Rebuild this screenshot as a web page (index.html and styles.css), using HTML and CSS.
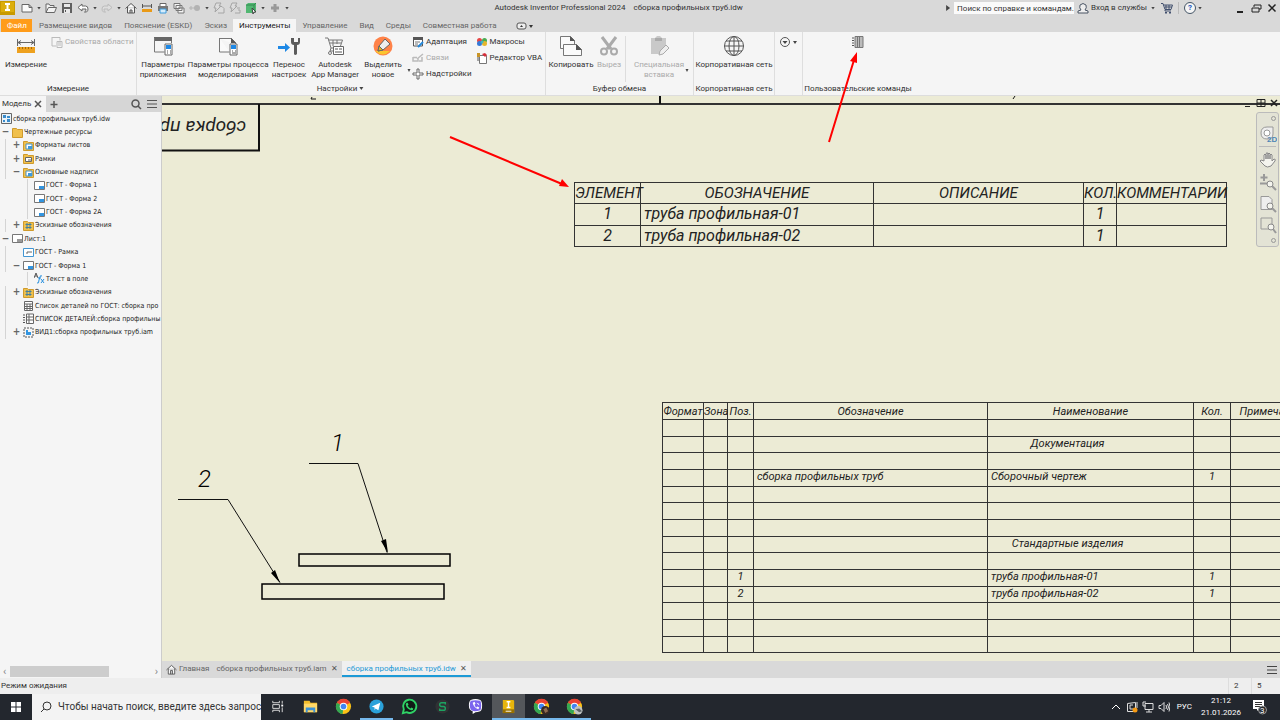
FILE: index.html
```
<!DOCTYPE html>
<html lang="ru">
<head>
    <meta charset="UTF-8">
    <title>сборка профильных труб.idw</title>
    <link rel="stylesheet" href="styles.css">
</head>
<body>
<svg class="sprite" aria-hidden="true">
    <symbol id="folder" viewBox="0 0 11 11"><path d="M0.5 1.5h4l1 1h5v8h-10z" fill="#f0c04c" stroke="#cf9a2c"/></symbol>
    <symbol id="folder-page" viewBox="0 0 11 11"><path d="M0.5 1.5h4l1 1h5v8h-10z" fill="#f0c04c" stroke="#cf9a2c"/><path d="M3 4h6v5h-6z" fill="#fff" stroke="#4b93c4"/><path d="M5 6h4v3h-4z" fill="#3a9ae0"/></symbol>
    <symbol id="folder-frame" viewBox="0 0 11 11"><path d="M0.5 1.5h4l1 1h5v8h-10z" fill="#f0c04c" stroke="#cf9a2c"/><path d="M2.5 4.5h6v4h-6z" fill="#fff" stroke="#666"/><path d="M5 7h3" stroke="#666"/></symbol>
    <symbol id="folder-sketch" viewBox="0 0 11 11"><path d="M0.5 1.5h4l1 1h5v8h-10z" fill="#f0c04c" stroke="#cf9a2c"/><path d="M4 3v6M7 3v6M2.5 4.5h6M2.5 7.5h6" stroke="#44809f"/></symbol>
    <symbol id="form" viewBox="0 0 11 11"><path d="M0.5 1.5h10v8h-10z" fill="#fff" stroke="#777"/><path d="M5 6h5v3h-5z" fill="#3295e0"/></symbol>
    <symbol id="gear-window" viewBox="0 0 22 20"><path d="M2 1h18v4h-18z" fill="#666"/><path d="M2.500 2v14h10M19.500 5v2" fill="none" stroke="#777"/><path d="M13 8h7v11h-7z" fill="#fff" stroke="#666"/><path d="M14 9h5v4h-5z" fill="#1e88e5"/><path d="M15 15h1M18 15h1M15 17h1M18 17h1" stroke="#555"/></symbol>
</svg>

<header class="titlebar">
    <div class="quick">
        <svg class="logo" viewBox="0 0 16 16"><path d="M0 1h15v14h-15z" fill="#c89a00"/><path d="M1 2h13v10h-13z" fill="#dcae0b"/><path d="M5 4h5M5 10h5M7.5 4v6" stroke="#fff" stroke-width="2"/></svg>
        <button aria-label="Создать"><svg viewBox="0 0 12 12"><path d="M1 2.500h7l3 3v4.500h-10zM8 2.500v3h3" fill="#fafafa" stroke="#666"/></svg></button>
        <i class="caret"></i>
        <button aria-label="Открыть"><svg viewBox="0 0 12 12"><path d="M1 10.500v-8.500h3l1 1.500h4v2M1 10.500l2.500-5h8l-2 5z" fill="#f2f2f2" stroke="#666"/></svg></button>
        <button aria-label="Сохранить"><svg viewBox="0 0 12 12"><path d="M1 1h10v10h-10z" fill="#606060"/><path d="M3 2h6v3h-6zM3 7h6v4h-6z" fill="#e8e8e8"/><path d="M4.500 8v2" stroke="#555"/></svg></button>
        <button aria-label="Отменить"><svg viewBox="0 0 12 12"><path d="M1 5.500l4-3.500v2h3.500q2.500 0 2.500 3 0 2-1.500 3h-2q2-1 1.500-3h-4v2z" fill="#fff" stroke="#666"/></svg></button>
        <i class="caret"></i>
        <button aria-label="Повторить"><svg viewBox="0 0 12 12"><path d="M11 5.500l-4-3.500v2h-3.500q-2.500 0-2.500 3 0 2 1.500 3h2q-2-1-1.500-3h4v2z" fill="#ddd" stroke="#bbb"/></svg></button>
        <i class="caret"></i>
        <button aria-label="Домой"><svg viewBox="0 0 12 12"><path d="M0.500 6.500l5.500-5 5.500 5M2.500 5v6h7v-6M5 11v-3h2v3" fill="#f8f8f8" stroke="#555"/></svg></button>
        <button aria-label="Измерить"><svg viewBox="0 0 12 12"><path d="M1.500 2v4M10.500 2v4M2 4h8" stroke="#555"/><path d="M1 7h10v3h-10z" fill="#e99a17"/></svg></button>
        <button aria-label="Печать"><svg viewBox="0 0 12 12"><path d="M3 1.500h6v3h-6z" fill="#fff" stroke="#666"/><path d="M1 4h10v5h-10z" fill="#777"/><path d="M3 7h6v4h-6z" fill="#d5ecfb" stroke="#3d9bdd"/></svg></button>
        <button aria-label="Копии"><svg viewBox="0 0 12 12"><path d="M1 1.500h6v5h-6zM3 3.500h6v5h-6zM5 6h6v5h-6z" fill="#f5f5f5" stroke="#777"/></svg></button>
        <button aria-label="Точка"><svg viewBox="0 0 12 12"><circle cx="8" cy="6" r="3" fill="#b3b3b3"/><path d="M0 6h6M2 4v4" stroke="#b3b3b3"/></svg></button>
        <i class="caret"></i>
        <button aria-label="Обновить"><svg viewBox="0 0 12 12"><path d="M3 1h5l-2 3h2l-6 6 1-4h-2zM8 4.500h1l2 2v4.500h-6" fill="#ddd" stroke="#a5a5a5"/></svg></button>
        <button aria-label="Обновить всё"><svg viewBox="0 0 12 12"><path d="M3 1h5l-2 3h2l-6 6 1-4h-2zM8 6h3M9 8h2v3h-5" fill="#ddd" stroke="#a5a5a5"/></svg></button>
        <button aria-label="Выбор"><svg viewBox="0 0 12 12"><path d="M1 3l2-2h8v8l-2 2h-8z" fill="#52b772"/><path d="M1 3h8v8M9 3l2-2" fill="none" stroke="#338b50"/><path d="M7 6l4 4-2 0-1 2z" fill="#fff" stroke="#444"/></svg></button>
        <i class="caret"></i>
        <button aria-label="Добавить"><svg viewBox="0 0 12 12"><path d="M6 2v8M2 6h8" stroke="#999" stroke-width="3"/></svg></button>
        <i class="caret"></i>
    </div>
    <div class="app-title">Autodesk Inventor Professional 2024 <span>сборка профильных труб.idw</span></div>
    <div class="account">
        <i class="caret right"></i>
        <input type="text" aria-label="Поиск по справке" placeholder="Поиск по справке и командам.">
        <button class="login"><svg viewBox="0 0 12 12"><path d="M1 11v-2l3-1q-2-2-1-5 3-3 6 0 1 3-1 5l3 1v2z" fill="#eee" stroke="#4a5565"/></svg>Вход в службы<i class="caret"></i></button>
        <button aria-label="Магазин"><svg viewBox="0 0 12 12"><path d="M0 1.500h2l2 6h6l1.500-4.500h-9M5 3v4M8 3v4M4 5h7M4 8l0 1h6" fill="none" stroke="#42506e"/><path d="M4 10h2v1.500h-2zM8 10h2v1.500h-2z" fill="#42506e"/></svg></button>
        <i class="line"></i>
        <button class="help" aria-label="Справка">?</button>
        <i class="caret"></i>
        <div class="window-buttons">
            <button aria-label="Свернуть"><svg viewBox="0 0 12 12"><path d="M3 10h6" stroke="#222" stroke-width="2"/></svg></button>
            <button aria-label="Развернуть"><svg viewBox="0 0 12 12"><path d="M4 5v-2h7v4h-2M2 6h7v4h-7z" fill="none" stroke="#222"/></svg></button>
            <button aria-label="Закрыть"><svg viewBox="0 0 12 12"><path d="M2.500 2.500l7 7M9.500 2.500l-7 7" stroke="#222" stroke-width="1.500"/></svg></button>
        </div>
    </div>
</header>

<nav class="ribbon-tabs">
    <a class="file" href="#">Файл</a>
    <a href="#">Размещение видов</a>
    <a href="#">Пояснение (ESKD)</a>
    <a href="#">Эскиз</a>
    <a class="selected" href="#">Инструменты</a>
    <a href="#">Управление</a>
    <a href="#">Вид</a>
    <a href="#">Среды</a>
    <a href="#">Совместная работа</a>
    <button aria-label="Лента"><svg viewBox="0 0 18 8"><rect x="1" y="1" width="9" height="6" rx="2" fill="#eee" stroke="#555"/><path d="M4 5l1.500-2 1.500 2z" fill="#333"/><path d="M13 3h4l-2 3z" fill="#333"/></svg></button>
</nav>

<section class="ribbon">
    <div class="group measure">
        <div class="tools">
            <button class="big"><svg viewBox="0 0 22 20"><path d="M2.500 3v7M19.500 3v7M3 6.500h16M6 4.500l-3 2 3 2M16 4.500l3 2-3 2" fill="none" stroke="#666"/><path d="M2 11h18v6h-18z" fill="#eea11e"/><path d="M4.500 11v2M7.500 11v2M10.500 11v2M13.500 11v2M16.500 11v2" stroke="#a66b0b"/></svg>Измерение</button>
            <div class="column"><button class="small off"><svg viewBox="0 0 12 12"><path d="M1 1.500h8v3M1 1v9h4M6 5.500h5v6h-5zM7 7h3M7 9h3" fill="none" stroke="#bbb"/></svg>Свойства области</button></div>
        </div>
        <h2>Измерение</h2>
    </div>
    <div class="group settings">
        <div class="tools">
            <button class="big"><svg><use href="#gear-window"/></svg><span>Параметры<br>приложения</span></button>
            <button class="big wide"><svg viewBox="0 0 22 20"><path d="M2.500 2.500h12l4 4v2M14.500 2.500v4h4M2.500 2v14h10" fill="#fafafa" stroke="#777"/><path d="M14 2l5 5h-5z" fill="#555"/><path d="M13 8h7v11h-7z" fill="#fff" stroke="#666"/><path d="M14 9h5v4h-5z" fill="#1e88e5"/><path d="M15 15h1M18 15h1M15 17h4" stroke="#555"/></svg><span>Параметры процесса<br>моделирования</span></button>
            <button class="big narrow"><svg viewBox="0 0 22 20"><path d="M0 10h7v-3l5 4.500-5 4.500v-3h-7z" fill="#1e88e5"/><path d="M13 2v4q0 3 3 3v9q1 2 3 0v-9q3 0 3-3v-4h-2v4h-4v-4z" fill="#5b5b5b"/></svg><span>Перенос<br>настроек</span></button>
            <button class="big"><svg viewBox="0 0 22 20"><path d="M1 2h3l3 10h3M4.500 4h14l-2 6M6 7h11M9 4v6M13 4v4M7 12l-1 3h4" fill="none" stroke="#777"/><path d="M9.500 10.500h10v8h-10z" fill="#fff" stroke="#666"/><path d="M11 13h3M11 16h7M15 13h3" stroke="#555"/><circle cx="6" cy="17" r="1.500" fill="none" stroke="#777"/></svg><span>Autodesk<br>App Manager</span></button>
            <button class="big mark"><svg viewBox="0 0 22 20"><circle cx="11" cy="10" r="9.500" fill="#ff8248"/><path d="M3 15h15q-7 7-15 0" fill="#f9c62e"/><path d="M7 10l6-7 5 5-7 6-5 1z" fill="#eee" stroke="#666"/><path d="M6 15l1-5 4 4z" fill="#e2b324" stroke="#666"/></svg><span>Выделить<br>новое</span></button>
            <i class="caret"></i>
            <div class="column">
                <button class="small"><svg viewBox="0 0 12 12"><path d="M1.500 2h9v8h-9z" fill="#fff" stroke="#555"/><path d="M1 1h10v3h-10z" fill="#555"/><path d="M3 6h5M3 8h3" stroke="#777"/><path d="M6 11l5-5" stroke="#268adb" stroke-width="2"/></svg>Адаптация</button>
                <button class="small off"><svg viewBox="0 0 12 12"><path d="M1 5.500h4M1 5v4h5v-3M5 7l6-5M7 9h3v-4" fill="none" stroke="#bbb" stroke-width="1.500"/></svg>Связи</button>
                <button class="small"><svg viewBox="0 0 12 12"><path d="M5 1h2v4h4v2h-4v4h-2v-4h-4v-2h4z" fill="#fff" stroke="#666"/></svg>Надстройки</button>
            </div>
            <div class="column">
                <button class="small"><svg viewBox="0 0 12 12"><circle cx="3.500" cy="4.500" r="2.500" fill="#e74646"/><circle cx="3.500" cy="7.500" r="2.500" fill="#3679d6"/><circle cx="8.500" cy="4.500" r="2.500" fill="#4aac51"/><circle cx="8.500" cy="7.500" r="2.500" fill="#e7b62b"/><circle cx="6" cy="6" r="1.500" fill="#42b6c0"/></svg>Макросы</button>
                <button class="small"><svg viewBox="0 0 12 12"><path d="M3.500 3.500h7v8h-7z" fill="#fff" stroke="#777"/><path d="M1 1h3v4h-3z" fill="#c99426"/><path d="M6 2l3-1 2 2-2 2z" fill="#d72c38"/><path d="M2 5v4" stroke="#555"/></svg>Редактор VBA</button>
            </div>
        </div>
        <h2>Настройки <i class="caret"></i></h2>
    </div>
    <div class="group clipboard">
        <div class="tools">
            <button class="big copy"><svg viewBox="0 0 22 20"><path d="M0.500 0.500h10l4 4v8h-14z" fill="#fafafa" stroke="#777"/><path d="M10 0l5 5h-5z" fill="#555"/><path d="M3.500 8.500h13l5 5v6h-18z" fill="#fafafa" stroke="#777"/><path d="M16 8l6 6h-6z" fill="#555"/></svg>Копировать</button>
            <button class="big cut off"><svg viewBox="0 0 22 20"><path d="M4 1l9 12M18 1l-9 12" stroke="#aaa" stroke-width="3"/><circle cx="6" cy="15.500" r="3" fill="none" stroke="#aaa" stroke-width="2"/><circle cx="16" cy="15.500" r="3" fill="none" stroke="#aaa" stroke-width="2"/></svg>Вырез</button>
            <i class="line"></i>
            <button class="big off"><svg viewBox="0 0 22 20"><path d="M3 2h4l2-2h3l2 2h4v10l-6 6h-9z" fill="#c9c9c9"/><path d="M7 2h7v3h-7z" fill="#aaa"/><path d="M11 19l1-4 6-6 3 3-6 6z" fill="#eee" stroke="#aaa"/></svg><span>Специальная<br>вставка</span></button>
            <i class="caret"></i>
        </div>
        <h2>Буфер обмена</h2>
    </div>
    <div class="group network">
        <div class="tools">
            <button class="big wide"><svg viewBox="0 0 22 20"><g fill="none" stroke="#555"><circle cx="11" cy="10" r="9.500"/><ellipse cx="11" cy="10" rx="5" ry="9.500"/><path d="M11 0.500v19M1.500 10h19M3 5h16M3 15h16"/></g></svg>Корпоративная сеть</button>
        </div>
        <h2>Корпоративная сеть</h2>
    </div>
    <div class="group options">
        <button aria-label="Параметры"><svg viewBox="0 0 12 12"><circle cx="6" cy="6" r="4.500" fill="none" stroke="#555"/><path d="M3.500 5h5l-2.500 3z" fill="#444"/></svg></button><i class="caret"></i>
    </div>
    <div class="group custom">
        <div class="tools">
            <button aria-label="Список деталей"><svg viewBox="0 0 12 12"><path d="M3 0.500h8v11h-8z" fill="#bbb" stroke="#777"/><path d="M5.500 1v10M7.500 1v10" stroke="#777"/><path d="M0 2h2M0 4.500h2M0 7h2M0 9.500h2" stroke="#555"/></svg></button>
        </div>
        <h2>Пользовательские команды</h2>
    </div>
</section>

<main class="workspace">
    <aside class="browser">
        <div class="browser-head">
            <button class="model">Модель <svg viewBox="0 0 12 12"><path d="M3 3l6 6M9 3l-6 6" stroke="#555" stroke-width="1.500"/></svg></button>
            <button class="plus" aria-label="Добавить"><svg viewBox="0 0 12 12"><path d="M6 3v7M2.500 6.500h7" stroke="#555" stroke-width="1.500"/></svg></button>
            <button aria-label="Поиск"><svg viewBox="0 0 12 12"><circle cx="5.500" cy="5.500" r="3.500" fill="none" stroke="#555" stroke-width="1.500"/><path d="M8 8l3 3" stroke="#555" stroke-width="1.500"/></svg></button>
            <button aria-label="Меню"><svg viewBox="0 0 12 12"><path d="M1 2.500h10M1 6h10M1 9.500h10" stroke="#555"/></svg></button>
        </div>
        <ul class="tree">
            <li><svg viewBox="0 0 11 11"><path d="M0.500 0.500h10v10h-10z" fill="#e9f3fa" stroke="#666"/><path d="M2 2h3v3h-3zM6 3h3v2h-3zM2 7h2v2h-2zM6 6h3v3h-3z" fill="#398ccc"/></svg>сборка профильных труб.idw</li>
            <li class="l1"><b>−</b><svg><use href="#folder"/></svg>Чертежные ресурсы</li>
            <li class="l2"><b>+</b><svg><use href="#folder-page"/></svg>Форматы листов</li>
            <li class="l2"><b>+</b><svg><use href="#folder-frame"/></svg>Рамки</li>
            <li class="l2"><b>−</b><svg><use href="#folder-page"/></svg>Основные надписи</li>
            <li class="l3"><b></b><svg><use href="#form"/></svg>ГОСТ - Форма 1</li>
            <li class="l3"><b></b><svg><use href="#form"/></svg>ГОСТ - Форма 2</li>
            <li class="l3"><b></b><svg><use href="#form"/></svg>ГОСТ - Форма 2А</li>
            <li class="l2"><b>+</b><svg><use href="#folder-sketch"/></svg>Эскизные обозначения</li>
            <li class="l1"><b>−</b><svg viewBox="0 0 11 11"><path d="M0.500 1.500h10v8h-10z" fill="#fff" stroke="#777"/><path d="M5 6h5v3h-5z" fill="#999"/></svg>Лист:1</li>
            <li class="l2"><b></b><svg viewBox="0 0 11 11"><path d="M0.500 1.500h10v8h-10z" fill="#fff" stroke="#4396d2"/><path d="M4 7v-2h5" fill="none" stroke="#666"/></svg>ГОСТ - Рамка</li>
            <li class="l2"><b>−</b><svg><use href="#form"/></svg>ГОСТ - Форма 1</li>
            <li class="l3"><b></b><svg viewBox="0 0 11 11"><path d="M0 5l2-5 2 5M1 3h2" fill="none" stroke="#555"/><path d="M3 10q2 1 2-3l1-3q0-2 2-1M4 5h3M7 6l3 4M10 6l-3 4" fill="none" stroke="#268fdd"/></svg>Текст в поле</li>
            <li class="l2"><b>+</b><svg><use href="#folder-sketch"/></svg>Эскизные обозначения</li>
            <li class="l2"><b></b><svg viewBox="0 0 11 11"><path d="M1.500 1.500h8v9h-8zM1.500 4h8M1.500 6.500h8M1.500 8.500h8M4 4v6M7 4v6" fill="#fff" stroke="#666"/></svg>Список деталей по ГОСТ: сборка про</li>
            <li class="l2"><b></b><svg viewBox="0 0 11 11"><path d="M3.500 1h7v9.500h-7zM3.500 4h7M3.500 7h7M6 1v9" fill="#fff" stroke="#666"/><path d="M0 2h2M0 4.500h2M0 7h2M0 9.500h2" stroke="#555"/></svg>СПИСОК ДЕТАЛЕЙ:сборка профильны</li>
            <li class="l2"><b>+</b><svg viewBox="0 0 11 11"><path d="M1 1h9v9h-9z" fill="none" stroke="#555" stroke-dasharray="2 1"/><path d="M3 3h2v2h3v3h-5z" fill="#3295e0"/></svg>ВИД1:сборка профильных труб.iam</li>
        </ul>
        <div class="scroll"><span>‹</span><i></i><span>›</span></div>
    </aside>

    <section class="documents">
        <div class="sheet">
            <svg class="drawing" width="1120" height="566">
                <g fill="none" stroke="#111">
                    <path d="M0 8h1118" stroke="#333" stroke-width="2"/>
                    <path d="M498 0v8M97 8v47M0 54.500h98" stroke-width="2"/>
                    <path d="M150 1l-1 2h5M853 0l-2 3" stroke-width="1"/>
                    <path d="M147 367.500h49l29 89M16 403.500h50l52 83"/>
                    <path d="M137 458h151v12h-151zM100 488h182v15h-182z" stroke="#000" stroke-width="1.500"/>
                </g>
                <path d="M226 457l-7-12 5-2zM118 487l-9-10 4-3z"/>
                <text x="169" y="355">1</text>
                <text x="36" y="391">2</text>
            </svg>
            <div class="stamp">сборка про</div>

            <table class="parts">
                <colgroup><col class="c-item"><col class="c-name"><col class="c-desc"><col class="c-count"><col class="c-note"></colgroup>
                <tr><th>ЭЛЕМЕНТ</th><th>ОБОЗНАЧЕНИЕ</th><th>ОПИСАНИЕ</th><th>КОЛ.</th><th>КОММЕНТАРИИ</th></tr>
                <tr><td>1</td><td class="text">труба профильная-01</td><td></td><td>1</td><td></td></tr>
                <tr><td>2</td><td class="text">труба профильная-02</td><td></td><td>1</td><td></td></tr>
            </table>

            <table class="spec">
                <colgroup><col class="s-format"><col class="s-zone"><col class="s-pos"><col class="s-code"><col class="s-name"><col class="s-count"><col class="s-note"></colgroup>
                <tr><th>Формат</th><th>Зона</th><th>Поз.</th><th>Обозначение</th><th>Наименование</th><th>Кол.</th><th>Примечание</th></tr>
                <tr><td></td><td></td><td></td><td></td><td></td><td></td><td></td></tr>
                <tr><td></td><td></td><td></td><td></td><td class="section">Документация</td><td></td><td></td></tr>
                <tr><td></td><td></td><td></td><td></td><td></td><td></td><td></td></tr>
                <tr><td></td><td></td><td></td><td class="text">сборка профильных труб</td><td class="text">Сборочный чертеж</td><td>1</td><td></td></tr>
                <tr><td></td><td></td><td></td><td></td><td></td><td></td><td></td></tr>
                <tr><td></td><td></td><td></td><td></td><td></td><td></td><td></td></tr>
                <tr><td></td><td></td><td></td><td></td><td></td><td></td><td></td></tr>
                <tr><td></td><td></td><td></td><td></td><td class="section">Стандартные изделия</td><td></td><td></td></tr>
                <tr><td></td><td></td><td></td><td></td><td></td><td></td><td></td></tr>
                <tr><td></td><td></td><td>1</td><td></td><td class="text">труба профильная-01</td><td>1</td><td></td></tr>
                <tr><td></td><td></td><td>2</td><td></td><td class="text">труба профильная-02</td><td>1</td><td></td></tr>
                <tr><td></td><td></td><td></td><td></td><td></td><td></td><td></td></tr>
                <tr><td></td><td></td><td></td><td></td><td></td><td></td><td></td></tr>
                <tr><td></td><td></td><td></td><td></td><td></td><td></td><td></td></tr>
            </table>

            <div class="sheet-buttons">
                <button aria-label="Свернуть"><svg viewBox="0 0 12 12"><path d="M3 9.500h5" stroke="#222"/></svg></button>
                <button aria-label="Развернуть"><svg viewBox="0 0 12 12"><path d="M2 2.500h8v7h-8zM6 2.500v7M2 6h8" fill="none" stroke="#222"/></svg></button>
                <button aria-label="Закрыть"><svg viewBox="0 0 12 12"><path d="M3 3l6 6M9 3l-6 6" stroke="#222" stroke-width="1.500"/></svg></button>
            </div>
            <div class="navbar">
                <i></i>
                <button aria-label="Штурвал 2D"><svg viewBox="0 0 18 18"><path d="M2 8q0-6 6-6h6v7q0 5-6 5t-6-6z" fill="#eee" stroke="#999"/><circle cx="8" cy="8" r="3" fill="#fff" stroke="#999"/><text x="8" y="17">2D</text></svg></button>
                <hr>
                <button aria-label="Панорама"><svg viewBox="0 0 18 18"><path d="M5 10v-6q1-2 2 0v4-5q1-3 2 0v5-5q1-2 2 0v5-4q1-2 2 0v6l2-2q2 0 1 2l-4 5q-4 2-6 0l-5-5q0-2 4 0" fill="#f4f4ee" stroke="#888"/></svg></button>
                <button aria-label="Зум"><svg viewBox="0 0 18 18"><path d="M5 1v7M1.500 4.500h7M1 10.500h8" stroke="#999" stroke-width="2"/><circle cx="11" cy="11" r="3" fill="#f4f4ee" stroke="#888"/><path d="M13 13l4 4" stroke="#999" stroke-width="2"/></svg></button>
                <button aria-label="Показать всё"><svg viewBox="0 0 18 18"><path d="M2 1.500h8l3 3v10h-11z" fill="#eee" stroke="#999"/><circle cx="11" cy="11" r="3" fill="#f4f4ee" stroke="#888"/><path d="M13 13l4 4" stroke="#999" stroke-width="2"/></svg></button>
                <button aria-label="Рамка зума"><svg viewBox="0 0 18 18"><path d="M2 2h11v11h-11z" fill="none" stroke="#999"/><circle cx="12" cy="11" r="3" fill="#f4f4ee" stroke="#888"/><path d="M14 13l3 4" stroke="#999" stroke-width="2"/></svg></button>
                <i></i>
            </div>
        </div>
        <nav class="doc-tabs">
            <a class="home" href="#"><svg viewBox="0 0 12 12"><path d="M0.500 6.500l5.500-5 5.500 5M2.500 5v6h7v-6M5 11v-4h2v4" fill="#f8f8f8" stroke="#555"/></svg>Главная</a>
            <a href="#">сборка профильных труб.iam <span>✕</span></a>
            <a class="selected" href="#">сборка профильных труб.idw <span>✕</span></a>
            <button aria-label="Список документов"><svg viewBox="0 0 12 12"><path d="M1 2.500h10M1 6h10M1 9.500h10" stroke="#444"/></svg></button>
        </nav>
    </section>
</main>

<footer class="status">
    <span>Режим ожидания</span>
    <span class="cell">2</span>
    <span class="cell">5</span>
</footer>

<div class="taskbar">
    <button class="start" aria-label="Пуск"><svg viewBox="0 0 12 12"><path d="M1 1h4.500v4.500h-4.500zM6.500 1h4.500v4.500h-4.500zM1 6.500h4.500v4.500h-4.500zM6.500 6.500h4.500v4.500h-4.500z" fill="#fff"/></svg></button>
    <label class="find"><svg viewBox="0 0 12 12"><circle cx="7" cy="5" r="4" fill="none" stroke="#333"/><path d="M4 8l-3 3" stroke="#333"/></svg><input type="text" placeholder="Чтобы начать поиск, введите здесь запрос"></label>
    <div class="apps">
        <button aria-label="Представление задач"><svg viewBox="0 0 18 18"><path d="M4 3v2h7v-2M4 15v-2h7v2M4 7h7v4h-7zM14 3v3M14 10v5" fill="none" stroke="#ddd"/><path d="M13 7h2v2h-2z" fill="#fff"/></svg></button>
        <button aria-label="Проводник"><svg viewBox="0 0 18 18"><path d="M2 3h6l1 2h7v10h-14z" fill="#f2bd2c"/><path d="M2 6h14v9h-14z" fill="#ffd869"/><path d="M4 10h10v5h-2v-2h-6v2h-2z" fill="#3b91d5"/></svg></button>
        <button aria-label="Chrome"><svg viewBox="0 0 18 18"><circle cx="9" cy="9" r="8" fill="#fbc116"/><path d="M9 9l-7-4a8 8 0 0 1 14 0z" fill="#ea4335"/><path d="M9 9l-7-4a8 8 0 0 0 6 12z" fill="#34a853"/><circle cx="9" cy="9" r="4" fill="#fff"/><circle cx="9" cy="9" r="3" fill="#4285f4"/></svg></button>
        <button class="run" aria-label="Telegram"><svg viewBox="0 0 18 18"><circle cx="9" cy="9" r="7.500" fill="#2aa1da"/><path d="M4 9l9-4-2 8-3-2-1 2v-3z" fill="#fff"/></svg></button>
        <button aria-label="WhatsApp"><svg viewBox="0 0 18 18"><path d="M2 16l1-4a7 7 0 1 1 3 3z" fill="#111b17" stroke="#2fd366" stroke-width="2"/><path d="M6 5l1 0 1 2-1 1q1 2 3 3l1-1 2 1q0 2-2 2-5-1-6-6 0-1 1-2" fill="#2fd366"/></svg></button>
        <button aria-label="Приложение"><svg viewBox="0 0 18 18"><circle cx="9" cy="9" r="7.500" fill="#303234"/><path d="M12 7v-2h-4q-2 0-2 2t2 2h2q2 0 2 2t-2 2h-4v-2" fill="none" stroke="#1da362" stroke-width="1.500"/></svg></button>
        <button aria-label="Viber"><svg viewBox="0 0 18 18"><path d="M4 2q5-2 10 0 2 1 2 6t-2 6q-3 1-5 1l-3 2v-3q-4-1-4-6t2-6" fill="#fff"/><path d="M4 3q5-1 10 0 1 1 1 5t-1 5q-3 1-6 1-5 0-5-6 0-4 1-5" fill="#7b65ee"/><path d="M6 5q1 5 6 7l1-2-2-1-1 1q-2-1-2-3l1-1-1-2zM10 5q3 0 3 3" fill="#fff"/></svg></button>
        <button class="run active" aria-label="Inventor"><svg viewBox="0 0 18 18"><path d="M3 2h11l1 1v13h-12z" fill="#e7b50c"/><path d="M3 12h12v4h-12z" fill="#9a7200"/><path d="M7 4h4M7 10h4M9 4v6" stroke="#fff" stroke-width="1.500"/><path d="M6 14h6" stroke="#fff"/></svg></button>
        <button class="run" aria-label="Chrome, профиль 1"><svg viewBox="0 0 18 18"><circle cx="9" cy="9" r="8" fill="#fbc116"/><path d="M9 9l-7-4a8 8 0 0 1 14 0z" fill="#ea4335"/><path d="M9 9l-7-4a8 8 0 0 0 6 12z" fill="#34a853"/><circle cx="9" cy="9" r="4" fill="#fff"/><circle cx="9" cy="9" r="3" fill="#4285f4"/><circle cx="13" cy="13" r="4.500" fill="#392a24"/><path d="M11 12l3-2 2 4-3 2z" fill="#8f6c50"/></svg></button>
        <button class="run" aria-label="Chrome, профиль 2"><svg viewBox="0 0 18 18"><circle cx="9" cy="9" r="8" fill="#fbc116"/><path d="M9 9l-7-4a8 8 0 0 1 14 0z" fill="#ea4335"/><path d="M9 9l-7-4a8 8 0 0 0 6 12z" fill="#34a853"/><circle cx="9" cy="9" r="4" fill="#fff"/><circle cx="9" cy="9" r="3" fill="#4285f4"/><circle cx="13" cy="13" r="4.500" fill="#bec3c2"/><path d="M10 12l4-1 3 3-3 1z" fill="#5f6568"/></svg></button>
    </div>
    <div class="tray">
        <button aria-label="Скрытые значки"><svg viewBox="0 0 12 12"><path d="M2 8l4-4 4 4" fill="none" stroke="#fff"/></svg></button>
        <button aria-label="Обновления"><svg viewBox="0 0 12 12"><path d="M1.500 2.500l8-1v9h-8zM4 4h3M4 4v4h3M11 1v6" fill="none" stroke="#ddd"/><circle cx="9" cy="9" r="2.500" fill="#f59a13"/></svg></button>
        <button aria-label="Сеть"><svg viewBox="0 0 12 12"><path d="M3 2.500h8v6h-8zM7 8v3M4 11h6M1 1v4h3M1 1h3" fill="none" stroke="#ddd"/></svg></button>
        <button aria-label="Звук"><svg viewBox="0 0 12 12"><path d="M1 4.500h2l3-3v9l-3-3h-2zM8 4q1 2 0 4M9.500 3q2 3 0 6M11 1.500q2 4 0 9" fill="none" stroke="#ddd"/></svg></button>
        <span class="lang">РУС</span>
        <div class="clock">21:12<br>21.01.2026</div>
        <button class="notes" aria-label="Уведомления"><svg viewBox="0 0 16 16"><path d="M1 1h11v9h-5l-2 2v-2h-4z" fill="#fff"/><path d="M3 3.500h7M3 5.500h7M3 7.500h5" stroke="#333"/><circle cx="10.500" cy="11" r="4" fill="#26292d" stroke="#999"/><text x="8" y="14">3</text></svg></button>
    </div>
</div>

<svg class="pointers" width="430" height="150" aria-hidden="true">
    <g stroke="#f00" stroke-width="2"><path d="M10 92l112 47M389 97l25-82"/></g>
    <path d="M129 142l-10-1 3-7zM417 7l0 11-7-2z" fill="#f00"/>
</svg>
</body>
</html>
```
FILE: styles.css
```
*{
    margin: 0;
    padding: 0;
    box-sizing: border-box;
}
body{
    height: 100vh;
    display: flex;
    flex-direction: column;
    overflow: hidden;
    position: relative;
    font: 8px/10px Roboto, "Noto Sans", sans-serif;
    color: #333;
    background: #f5f5f5;
}
ul{
    list-style: none;
}
a{
    color: inherit;
    text-decoration: none;
}
button,input{
    border: 0;
    background: none;
    font: inherit;
    color: inherit;
}
.sprite{
    position: absolute;
    width: 0;
    height: 0;
}
button svg{
    width: 12px;
    height: 12px;
    display: block;
}
.caret{
    flex: none;
    width: 8px;
    height: 3px;
    background: #444;
    clip-path: polygon(25% 0, 75% 0, 50% 100%);
}
.caret.right{
    width: 4px;
    height: 6px;
    clip-path: polygon(0 0, 100% 50%, 0 100%);
}

/* title bar */
.titlebar{
    height: 16px;
    flex: none;
    display: flex;
    align-items: center;
    background: #d9d9d9;
}
.quick,.account,.window-buttons{
    display: flex;
    align-items: center;
}
.quick button{
    width: 16px;
    padding: 0 2px;
}
.logo{
    width: 16px;
    height: 16px;
    margin-right: 3px;
}
.app-title{
    flex: 1;
    text-align: center;
    white-space: nowrap;
}
.app-title span{
    margin-left: 6px;
}
.account input{
    width: 120px;
    height: 12px;
    margin: 0 3px 0 4px;
    padding-left: 3px;
    background: #fafafa;
}
.account input::placeholder,.find input::placeholder{
    color: #333;
    opacity: 1;
}
.login{
    display: flex;
    align-items: center;
    gap: 2px;
    margin-right: 4px;
}
.account .line{
    width: 1px;
    height: 12px;
    margin: 0 5px;
    background: #bbb;
}
.help{
    width: 12px;
    height: 12px;
    border: 1px solid #456;
    border-radius: 50%;
    background: #f5f5f5;
    color: #1b55c0;
    font-weight: bold;
    line-height: 10px;
}
.window-buttons{
    gap: 4px;
    margin: 0 2px 0 30px;
}

/* ribbon */
.ribbon-tabs{
    height: 16px;
    flex: none;
    display: flex;
    align-items: flex-end;
    padding-left: 1px;
    background: #d9d9d9;
    color: #666;
}
.ribbon-tabs a{
    height: 13px;
    padding: 0 6px;
    line-height: 13px;
    white-space: nowrap;
}
.ribbon-tabs .file{
    width: 31px;
    margin-right: 1px;
    text-align: center;
    background: #ff9c1a;
    color: #fff;
}
.ribbon-tabs .selected{
    background: #f5f5f5;
    color: #222;
}
.ribbon-tabs button{
    margin-left: 13px;
}
.ribbon-tabs svg{
    width: 18px;
    height: 12px;
}
.ribbon{
    height: 64px;
    flex: none;
    display: flex;
    border-bottom: 1px solid #ddd;
}
.group{
    display: flex;
    flex-direction: column;
    border-right: 1px solid #dedede;
}
.tools{
    flex: 1;
    min-height: 0;
    display: flex;
    padding-top: 4px;
}
.group h2{
    height: 13px;
    flex: none;
    display: flex;
    align-items: center;
    justify-content: center;
    font-size: 8px;
    line-height: 12px;
    font-weight: normal;
    white-space: nowrap;
}
.big{
    width: 50px;
    height: 46px;
    text-align: center;
    display: flex;
    flex-direction: column;
    align-items: center;
    gap: 4px;
    white-space: nowrap;
}
.big svg{
    width: 22px;
    height: 20px;
    flex: none;
}
.wide{
    width: 80px;
}
.narrow{
    width: 42px;
}
.mark{
    width: 46px;
}
.copy{
    width: 44px;
}
.cut{
    width: 32px;
}
.tools .caret{
    width: 6px;
    margin-top: 33px;
}
.column{
    display: flex;
    flex-direction: column;
}
.small{
    height: 16px;
    flex: none;
    display: flex;
    align-items: center;
    gap: 2px;
    white-space: nowrap;
}
.column{
    margin-top: -2px;
}
.off{
    color: #aaa;
}
.measure{
    width: 137px;
}
.settings{
    width: 409px;
}
.settings .column + .column{
    margin-left: 4px;
}
.measure .tools,.settings .tools{
    padding-left: 1px;
}
.clipboard{
    width: 148px;
}
.clipboard .tools{
    padding-left: 3px;
}
.tools .line{
    width: 1px;
    height: 46px;
    margin: 0 8px 0 0;
    background: #ddd;
}
.network{
    width: 81px;
}
.options{
    width: 28px;
    flex-direction: row;
    align-items: flex-start;
    padding: 4px 0 0 4px;
}
.options .caret{
    margin-top: 5px;
}
.custom{
    width: 110px;
    border: 0;
}
.custom .tools{
    justify-content: center;
    align-items: flex-start;
}

/* model browser */
.workspace{
    flex: 1;
    min-height: 0;
    display: flex;
}
.browser{
    width: 162px;
    flex: none;
    display: flex;
    flex-direction: column;
    border-right: 1px solid #ccc;
}
.browser-head{
    height: 16px;
    display: flex;
    align-items: center;
    gap: 4px;
    padding-right: 3px;
    background: #d6d6d6;
}
.model{
    height: 16px;
    width: 46px;
    display: flex;
    align-items: center;
    justify-content: space-between;
    padding: 0 2px;
    background: #f5f5f5;
}
.plus{
    margin: 0 auto 0 -2px;
}
.tree{
    height: 227px;
    display: grid;
    grid-template-rows: repeat(17, 1fr);
    overflow: hidden;
    font-family: "DejaVu Sans Condensed", "Open Sans", sans-serif;
    font-size: 7px;
    color: #222;
}
.tree li{
    display: flex;
    align-items: center;
    gap: 1px;
    padding-left: 1px;
    white-space: nowrap;
}
.tree svg{
    width: 11px;
    height: 11px;
    flex: none;
}
.tree b{
    width: 9px;
    margin-right: 1px;
    font-size: 10px;
    text-align: center;
    color: #666;
    flex: none;
}
.tree .l2{
    padding-left: 12px;
    background: linear-gradient(#d4d4d4, #d4d4d4) 5px 0 / 1px 100% no-repeat;
}
.tree .l3{
    padding-left: 23px;
    background: linear-gradient(#d4d4d4, #d4d4d4) 27px 0 / 1px 100% no-repeat;
}
.scroll{
    height: 13px;
    margin-top: auto;
    display: flex;
    align-items: center;
    padding: 0 3px;
    gap: 4px;
    font-size: 11px;
    color: #888;
}
.scroll i{
    width: 99px;
    height: 11px;
    margin-right: auto;
    background: #cdcdcd;
}

/* sheet */
.documents{
    flex: 1;
    min-width: 0;
    display: flex;
    flex-direction: column;
}
.sheet{
    flex: 1;
    min-height: 0;
    position: relative;
    overflow: hidden;
    background: #ecebd5;
    color: #222;
    font-style: italic;
}
.drawing{
    position: absolute;
    left: 0;
    top: 0;
}
.drawing text{
    font-size: 24px;
    font-weight: 300;
}
.stamp{
    position: absolute;
    right: calc(100% - 84px);
    top: 20px;
    font-size: 19px;
    line-height: 22px;
    white-space: nowrap;
    transform: rotate(180deg);
}
.parts,.spec{
    position: absolute;
    table-layout: fixed;
    border-collapse: collapse;
}
.sheet th,.sheet td{
    border: 1px solid #333;
    font-weight: normal;
    text-align: center;
    white-space: nowrap;
}
.sheet .text{
    text-align: left;
    padding-left: 3px;
}
.parts{
    left: 412px;
    top: 86px;
    width: 653px;
    height: 65px;
    font-size: 16px;
    line-height: 20px;
}
.parts th{
    font-size: 15px;
}
.c-item{ width: 66px; }
.c-name{ width: 233px; }
.c-desc{ width: 210px; }
.c-count{ width: 33px; }
.c-note{ width: 110px; }
.spec{
    left: 500px;
    top: 306px;
    width: 650px;
    font-size: 11px;
    line-height: 13px;
}
.spec tr{
    height: 17px;
}
.spec tr:nth-child(3n){
    height: 16px;
}
.spec td{
    vertical-align: top;
}
.s-format{ width: 41px; }
.s-zone{ width: 24px; }
.s-pos{ width: 26px; }
.s-code{ width: 234px; }
.s-name{ width: 206px; }
.s-count{ width: 37px; }
.s-note{ width: 81px; }
.spec .section{
    padding-right: 46px;
}
.sheet-buttons{
    position: absolute;
    right: 0;
    top: 1px;
    display: flex;
    gap: 1px;
}
.navbar{
    position: absolute;
    right: 1px;
    top: 16px;
    width: 23px;
    height: 135px;
    padding: 3px 2px;
    display: flex;
    flex-direction: column;
    align-items: center;
    justify-content: space-between;
    border: 1px solid #bbb;
    border-radius: 3px;
    background: #e3e3d5;
}
.navbar svg{
    width: 18px;
    height: 18px;
}
.navbar text{
    font: bold 8px "Liberation Sans", sans-serif;
    fill: #4d86b5;
}
.navbar hr{
    width: 17px;
    border: 0;
    border-top: 1px solid #bbb;
}
.navbar i{
    width: 5px;
    height: 5px;
    align-self: flex-end;
    border: 1px solid #999;
    border-radius: 50%;
}

/* document tabs and status */
.doc-tabs{
    height: 17px;
    flex: none;
    display: flex;
    padding: 0 2px;
    background: #d9d9d9;
    color: #666;
}
.doc-tabs a{
    height: 16px;
    padding: 0 4px 0 5px;
    line-height: 16px;
    white-space: nowrap;
}
.doc-tabs span{
    margin-left: 2px;
    color: #555;
}
.doc-tabs .home{
    display: flex;
    align-items: center;
    gap: 2px;
    padding: 0 2px;
}
.home svg{
    width: 11px;
    height: 11px;
}
.doc-tabs .selected{
    background: #f0f0f0;
    border-bottom: 2px solid #1d9ad6;
    color: #1d9ad6;
}
.doc-tabs button{
    margin-left: auto;
}
.status{
    height: 16px;
    flex: none;
    display: flex;
    padding: 0 6px 0 1px;
    background: #eee;
    line-height: 16px;
}
.status span:first-child{
    margin-right: auto;
}
.status .cell{
    width: 23px;
    padding-left: 5px;
    border-left: 1px solid #ddd;
}

/* taskbar */
.taskbar{
    height: 26px;
    flex: none;
    display: flex;
    background: #23272e;
    color: #fff;
}
.start{
    width: 32px;
    padding: 0 10px;
}
.find{
    width: 229px;
    display: flex;
    align-items: center;
    gap: 6px;
    padding-left: 8px;
    background: #f3f3f3;
    color: #333;
}
.find svg{
    width: 12px;
    height: 12px;
    flex: none;
}
.find input{
    flex: 1;
    min-width: 0;
    font-size: 10px;
    line-height: 14px;
}
.apps{
    display: flex;
}
.apps button{
    width: 33px;
    padding: 0 8px;
    border-bottom: 2px solid transparent;
}
.apps svg{
    width: 17px;
    height: 17px;
}
.apps .run{
    border-color: #76b9ed;
}
.apps .active{
    background: #54575b;
}
.tray{
    margin-left: auto;
    display: flex;
    align-items: center;
    gap: 4px;
    padding-right: 12px;
}
.lang{
    margin-left: 3px;
}
.clock{
    width: 42px;
    margin-left: 4px;
    text-align: center;
    line-height: 12px;
}
.notes{
    margin-left: 6px;
}
.notes svg{
    width: 16px;
    height: 16px;
}
.notes text{
    font-size: 8px;
    fill: #fff;
}

/* red arrows over the window */
.pointers{
    position: absolute;
    left: 440px;
    top: 45px;
    pointer-events: none;
}
```
